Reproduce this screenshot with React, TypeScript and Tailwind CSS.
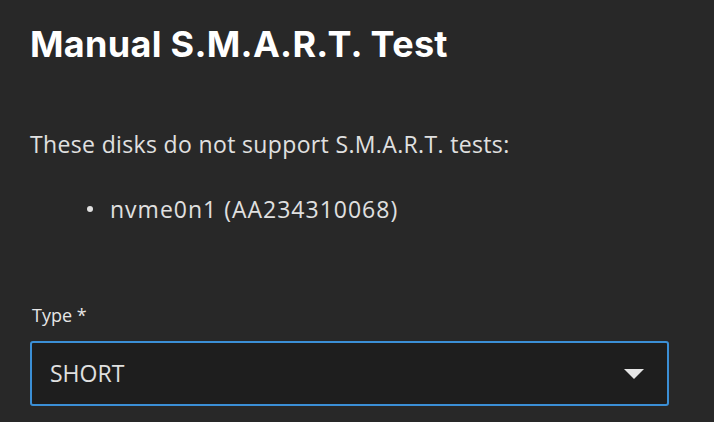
const titleFont = { fontFamily: "Inter, Roboto, sans-serif" }
const bodyFont = { fontFamily: "'Open Sans', 'Noto Sans', sans-serif" }

function CaretDown() {
  return (
    <svg width="20" height="10" viewBox="0 0 20 10" className="shrink-0">
      <path d="M0 0 L20 0 L10 10 Z" fill="#e6e6e6" />
    </svg>
  )
}

export default function App() {
  return (
    <div className="min-h-[422px] w-[714px] bg-[#282828] px-[30px] pt-[22px]" style={bodyFont}>
      <h1
        className="text-[36px] font-bold leading-[44px] tracking-[0.3px] text-white"
        style={titleFont}
      >
        Manual S.M.A.R.T. Test
      </h1>

      <p className="mt-[62px] text-[23px] leading-[32px] tracking-[0.35px] text-[#e0e0e0]">
        These disks do not support S.M.A.R.T. tests:
      </p>

      <ul className="mt-[33px] pl-[57px] text-[23px] leading-[32px] tracking-[1px] text-[#e0e0e0]">
        <li className="flex items-center gap-[17px]">
          <span className="h-[6px] w-[6px] rounded-full bg-[#e0e0e0]" />
          nvme0n1 (AA234310068)
        </li>
      </ul>

      <label className="mt-[78px] block pl-[2px] text-[18px] leading-[24px] text-[#e6e6e6]">
        Type *
      </label>

      <div className="mt-[14px] flex h-[65px] w-[639px] items-center justify-between rounded-[3px] border-2 border-[#3b8fd6] bg-[#1e1e1e] pl-[18px] pr-[23px]">
        <span className="text-[23px] text-[#e0e0e0]">SHORT</span>
        <CaretDown />
      </div>
    </div>
  )
}
